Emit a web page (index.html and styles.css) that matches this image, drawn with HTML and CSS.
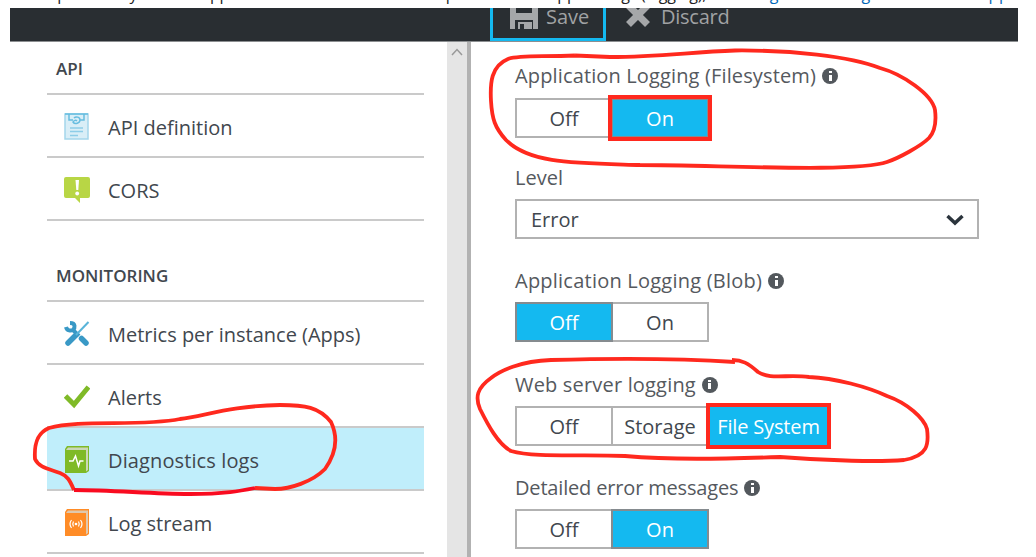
FILE: index.html
```html
<!DOCTYPE html>
<html lang="en">
<head>
<meta charset="utf-8">
<title>Diagnostics logs</title>
<link rel="stylesheet" href="styles.css">
</head>
<body>
<div class="page">
  <p class="caption"><span class="caption-text">in the portal for your web app and then click on the link to open the list of app settings (logging),</span><a class="caption-link">Diagnostics Logs in the Web Apps</a></p>
  <div class="toolbar">
    <div class="tool save">
      <svg class="save-icon" width="28" height="28" viewBox="0 0 28 28"><path fill="#a5a7a9" fill-rule="evenodd" d="M0 0h6v12h16V0h6v28h-5V19H5v9H0zM8 21h14v7h-8v-5h-4v5H8z"/></svg>
      <span class="t-save">Save</span>
    </div>
    <div class="tool discard">
      <svg class="discard-icon" width="24" height="24" viewBox="0 0 24 24"><path stroke="#a5a7a9" stroke-width="7" d="M2.500 2.500l19 19M21.500 2.500l-19 19"/></svg>
      <span class="t-discard">Discard</span>
    </div>
  </div>
  <div class="content">
    <nav class="sidebar">
      <h2 class="t-api">API</h2>
      <div class="item">
        <svg width="26" height="28" viewBox="0 0 26 28"><path fill="#d9eef7" stroke="#a4d6eb" stroke-width="1.5" d="M1 1h23v25H1z"/><path fill="none" stroke="#67bde0" stroke-width="1.5" d="M1 1h23M5 1v6h4M20 1v6h-4M10 5c2-2 6-1 6 2s-5 5-7 2c1-2 3-2 4-1"/><path stroke="#8dcde8" stroke-width="1.5" d="M6 15h13M6 18.500h13M6 22.500h8"/></svg>
        <span class="t-def">API definition</span>
      </div>
      <div class="item">
        <svg width="26" height="28" viewBox="0 0 26 28"><path fill="#b8d645" d="M2 1h22q2 0 2 2v17q0 2-2 2h-8v5l-5-5H2q-2 0-2-2V3q0-2 2-2z"/><path fill="#fff" d="M11.500 4h3.500l-.7 10h-2z"/><circle cx="13.200" cy="17.500" r="1.900" fill="#fff"/></svg>
        <span class="t-cors">CORS</span>
      </div>
      <h2 class="second t-mon">MONITORING</h2>
      <div class="item">
        <svg width="26" height="28" viewBox="0 0 26 28"><path fill="none" stroke="#3999c6" stroke-width="5.500" stroke-linecap="round" d="M4 23l7-7M17.500 18.500l4.500 4.500"/><path fill="none" stroke="#3999c6" stroke-width="4" d="M6 3c6 0 5 5 3 7-2 1-6 1-7-3M9 10l6 6"/><path stroke="#59b4d9" stroke-width="2" d="M12 15L24.500 2"/></svg>
        <span class="t-met">Metrics per instance (Apps)</span>
      </div>
      <div class="item">
        <svg width="26" height="28" viewBox="0 0 26 28"><path fill="none" stroke="#7fba27" stroke-width="5" d="M1.500 13l8.500 8.500L24.500 4"/></svg>
        <span class="t-ale">Alerts</span>
      </div>
      <div class="item active">
        <svg width="26" height="28" viewBox="0 0 26 28"><path fill="#7fba27" d="M3 0h22v25l-3 2H1V3z"/><path fill="#cbd7b7" d="M4 1.500h20V24l-2 1.500V4H2z"/><path fill="#7fba27" d="M1 4h21v23H1z"/><path fill="none" stroke="#fff" stroke-width="1.500" d="M5 15h4l2.500-5 3 10 1.500-5h3.500"/></svg>
        <span class="t-dia">Diagnostics logs</span>
      </div>
      <div class="item">
        <svg width="26" height="28" viewBox="0 0 26 28"><path fill="#ff8c27" d="M3 0h22v25l-3 2H1V3z"/><path fill="#dfc8ae" d="M4 1.500h20V24l-2 1.500V4H2z"/><path fill="#ff8c27" d="M1 4h21v23H1z"/><path fill="none" stroke="#fff" stroke-width="1.200" d="M7.500 11q-3 4 0 8M9.500 12.500q-1.500 2.500 0 5M14.500 12.500q1.500 2.500 0 5M16.500 11q3 4 0 8"/><circle cx="12" cy="15" r="1.300" fill="#fff"/></svg>
        <span class="t-log">Log stream</span>
      </div>
    </nav>
    <div class="scrollbar"><svg width="12" height="8" viewBox="0 0 12 8"><path fill="none" stroke="#999" stroke-width="1.500" d="M1 7l5-5.500L11 7"/></svg></div>
    <main class="settings">
      <section class="group first">
        <div class="label"><span class="t-fs">Application Logging (Filesystem)</span><i class="info"></i></div>
        <div class="switch"><span class="opt">Off</span><span class="opt on marked">On</span></div>
      </section>
      <section class="group">
        <div class="label"><span class="t-level">Level</span></div>
        <div class="select"><span class="t-error">Error</span><svg width="18" height="12" viewBox="0 0 18 12"><path fill="none" stroke="#2b343c" stroke-width="3.500" d="M1.500 2L9 9l7.500-7"/></svg></div>
      </section>
      <section class="group">
        <div class="label"><span class="t-blob">Application Logging (Blob)</span><i class="info"></i></div>
        <div class="switch"><span class="opt on">Off</span><span class="opt">On</span></div>
      </section>
      <section class="group">
        <div class="label"><span class="t-web">Web server logging</span><i class="info"></i></div>
        <div class="switch"><span class="opt">Off</span><span class="opt t-sto">Storage</span><span class="opt on marked wide">File System</span></div>
      </section>
      <section class="group">
        <div class="label"><span class="t-det">Detailed error messages</span><i class="info"></i></div>
        <div class="switch"><span class="opt">Off</span><span class="opt on">On</span></div>
      </section>
    </main>
  </div>
  <svg class="marks" width="1036" height="557" viewBox="0 0 1036 557">
    <path d="M575 55.500C540 57 519 55 508 59C491 66 490 83 491 101C492 119 495 128 506 140C530 164 575 163 640 165C720 165 855 173 887 162C899 158 921 146 929 138C936 130 936 118 935 110C932 94 902 74 880 68C850 56 790 50 735 50.500C690 52 660 57 610 57L575 55.500"/>
    <path d="M735 362C690 359 620 358 551 360C520 361 500 371 491 378C477 388 475 397 480 409C488 425 498 444 511 451C535 458 580 454 625 456C670 460 720 459 780 457C830 461 880 462 904 460C928 456 929 444 927 429C924 418 907 403 887 396C868 387 835 378 809 377C788 374 770 380 758 372C748 363 742 360 732 360"/>
    <path d="M74 490C70 481 68 476 60 473C50 469 39 468 35 459C34 444 37 433 49 428C80 419 140 427 180 419C205 416 230 406 280 405C305 405 319 407 331 422C339 439 335 455 325 469C312 482 290 489 275 489L255 488"/>
    <path class="dark" d="M74 490C115 490 150 494 190 494C225 494 240 491 255 488"/>
  </svg>
</div>
</body>
</html>
```
FILE: styles.css
```css
body { margin: 0; }
.page {
  position: relative;
  width: 1036px;
  height: 557px;
  overflow: hidden;
  background: #fff;
  font: 20px/24px "Open Sans", "Noto Sans", sans-serif;
  color: #41474e;
}
.caption {
  display: flex;
  align-items: flex-end;
  justify-content: space-between;
  box-sizing: border-box;
  height: 8px;
  margin: 0 18px 0 12px;
  padding-bottom: 4px;
  overflow: hidden;
  font-size: 16px;
  line-height: 20px;
  color: #222;
  white-space: nowrap;
}
.caption-text { letter-spacing: -0.2px; }
.caption-link { color: #0067b8; letter-spacing: 0.8px; }
.toolbar {
  display: flex;
  box-sizing: border-box;
  height: 34px;
  margin: 0 18px 0 10px;
  padding-left: 480px;
  overflow: hidden;
  background: #292e32;
  border-bottom: 1px solid #8c8f91;
  color: #a0a2a4;
}
.tool { display: flex; box-sizing: border-box; height: 33px; }
.tool span { margin-top: -3px; }
.save { width: 116px; padding-left: 17px; border: 3px solid #14b9f0; border-top: 0; }
.save-icon { margin: -7px 8px 0 0; }
.discard { padding-left: 20px; }
.discard-icon { margin: -5px 11px 0 0; }
.t-discard { letter-spacing: -0.25px; }
svg { flex: none; }
.content { display: flex; height: 515px; }
.sidebar { box-sizing: border-box; width: 447px; padding: 0 23px 0 47px; }
h2 {
  box-sizing: border-box;
  height: 53px;
  margin: 0;
  padding: 15px 0 0 9px;
  border-bottom: 2px solid #cacaca;
  font-size: 17px;
  font-weight: 600;
  line-height: 24px;
}
h2.second { height: 81px; padding-top: 43px; }
.item {
  display: flex;
  align-items: center;
  box-sizing: border-box;
  height: 63px;
  padding-left: 17px;
  border-bottom: 2px solid #cacaca;
}
.item svg { margin: 2px 18px 0 0; }
.item span { padding-top: 5px; white-space: nowrap; }
.t-dia { letter-spacing: 0.12px; }
.active { background: #c0eefb; }
.scrollbar {
  display: flex;
  justify-content: center;
  box-sizing: border-box;
  width: 24px;
  padding-top: 6px;
  background: #e5e5e5;
  border-right: 4px solid #b2b2b2;
}
.settings { flex: 1; padding: 22px 0 0 44px; }
.group { height: 103.400px; }
.group.first { height: 101px; }
.label { box-sizing: border-box; display: flex; height: 34px; color: #55595e; white-space: nowrap; }
.group:not(.first) .label { padding-top: 1px; height: 34px; }
.t-fs { letter-spacing: 0.14px; }
.t-blob { letter-spacing: 0.23px; }
.t-web { letter-spacing: 0.18px; }
.t-det { letter-spacing: -0.17px; }
.info {
  position: relative;
  width: 16px;
  height: 16px;
  margin: 4px 0 0 6px;
  border-radius: 50%;
  background: #53585d;
}
.info::before, .info::after { content: ""; position: absolute; left: 6.500px; width: 3px; background: #fff; }
.info::before { top: 3px; height: 2px; }
.info::after { top: 6.500px; height: 6px; }
.switch { display: flex; height: 40px; }
.opt {
  position: relative;
  display: flex;
  align-items: center;
  justify-content: center;
  box-sizing: border-box;
  width: 98px;
  height: 40px;
  padding-top: 2px;
  border: 2px solid #b2b2b2;
  white-space: nowrap;
}
.opt + .opt { margin-left: -2px; }
.opt.on { z-index: 1; background: #14b9f0; border-color: #858b8f; color: #fff; }
.opt.marked { outline: 4px solid #ff291e; outline-offset: -1px; }
.opt + .opt.wide { width: 119px; margin-left: 0; border-color: #14b9f0; letter-spacing: -0.15px; }
.select {
  display: flex;
  align-items: center;
  justify-content: space-between;
  box-sizing: border-box;
  width: 464px;
  height: 40px;
  padding: 1px 13px 0 14px;
  border: 2px solid #b2b2b2;
}
.marks { position: absolute; left: 0; top: 0; z-index: 2; }
.marks path { fill: none; stroke: #ff291e; stroke-width: 3.800; stroke-linejoin: round; }
.marks .dark { stroke: #f90b20; }
```
